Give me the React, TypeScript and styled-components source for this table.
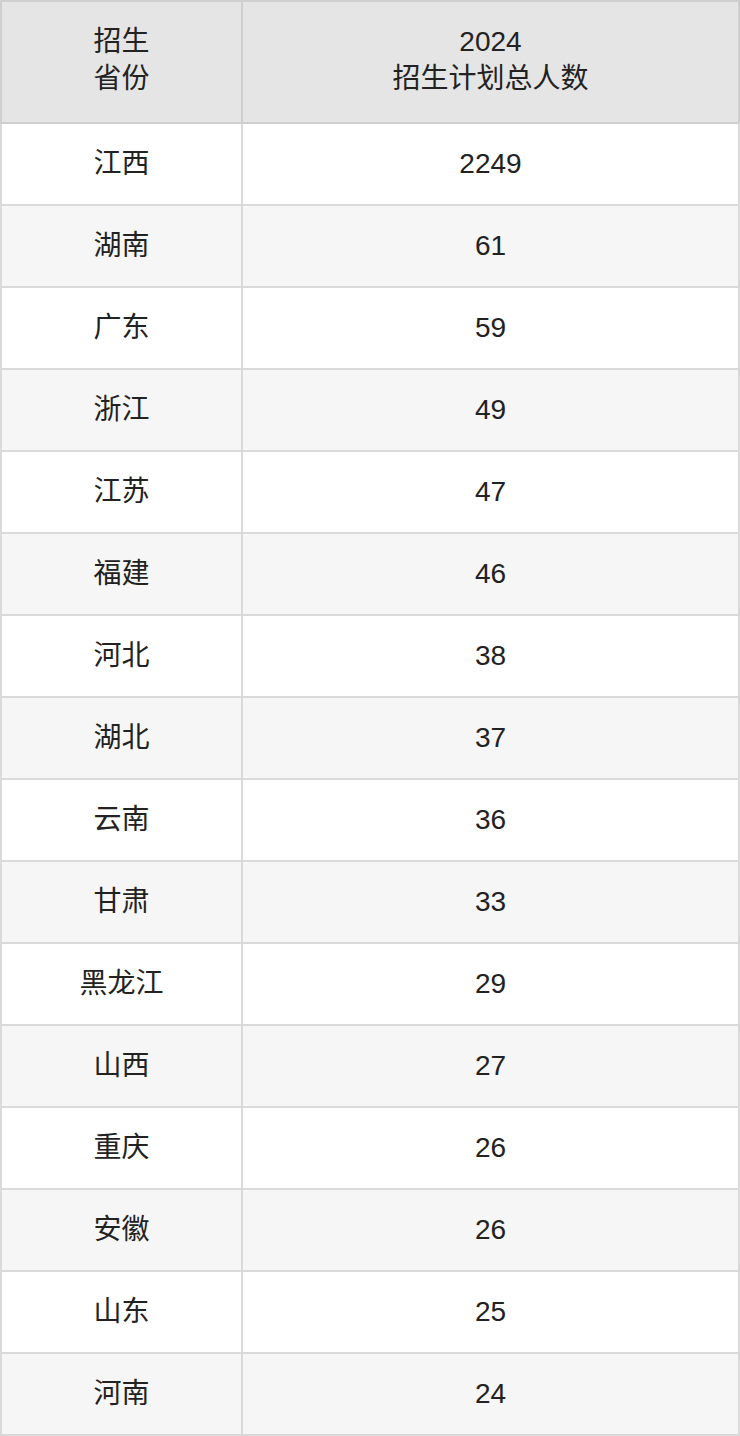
import React from "react";
import styled, { createGlobalStyle } from "styled-components";

const Global = createGlobalStyle`
  html, body { margin: 0; padding: 0; background: #fff; }
  body { font-family: "Liberation Sans", Arial, "Noto Sans CJK SC", sans-serif; }
`;

const Table = styled.table`
  width: 740px;
  border-collapse: collapse;
  table-layout: fixed;
  color: #222;
  font-size: 28px;
`;

const HeadCell = styled.th<{ $w?: number }>`
  ${(p) => (p.$w ? `width: ${p.$w}px;` : "")}
  height: 116px;
  padding: 0 0 4px;
  background: #e5e5e5;
  border: 2px solid #cfcfcf;
  font-weight: normal;
  line-height: 37px;
  text-align: center;
  vertical-align: middle;
`;

const Row = styled.tr<{ $alt: boolean }>`
  background: ${(p) => (p.$alt ? "#f6f6f6" : "#ffffff")};
`;

const Cell = styled.td`
  height: 80px;
  padding: 0;
  border: 2px solid #dadada;
  text-align: center;
  vertical-align: middle;
  line-height: 30px;
`;

const data: [string, string][] = [
  ["江西", "2249"],
  ["湖南", "61"],
  ["广东", "59"],
  ["浙江", "49"],
  ["江苏", "47"],
  ["福建", "46"],
  ["河北", "38"],
  ["湖北", "37"],
  ["云南", "36"],
  ["甘肃", "33"],
  ["黑龙江", "29"],
  ["山西", "27"],
  ["重庆", "26"],
  ["安徽", "26"],
  ["山东", "25"],
  ["河南", "24"],
];

export default function App() {
  return (
    <>
      <Global />
      <Table>
        <thead>
          <tr>
            <HeadCell $w={239}>
              招生
              <br />
              省份
            </HeadCell>
            <HeadCell>
              2024
              <br />
              招生计划总人数
            </HeadCell>
          </tr>
        </thead>
        <tbody>
          {data.map(([p, n], i) => (
            <Row key={p + i} $alt={i % 2 === 1}>
              <Cell>{p}</Cell>
              <Cell>{n}</Cell>
            </Row>
          ))}
        </tbody>
      </Table>
    </>
  );
}
